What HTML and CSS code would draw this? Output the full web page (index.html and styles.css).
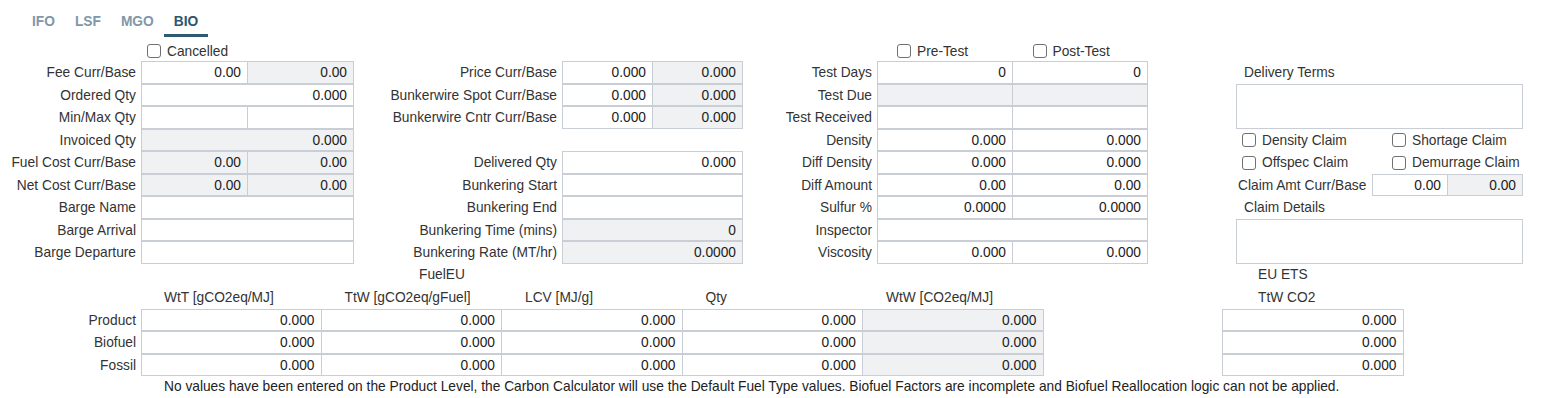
FILE: index.html
```html
<!DOCTYPE html>
<html lang="en">
<head>
    <meta charset="UTF-8">
    <meta name="viewport" content="width=device-width, initial-scale=1.0">
    <title>Fuel Details - BIO</title>
    <link rel="stylesheet" href="styles.css">
</head>
<body>
    <div class="tabs">
        <span class="tab">IFO</span>
        <span class="tab">LSF</span>
        <span class="tab">MGO</span>
        <span class="tab active">BIO</span>
    </div>

    <div class="top">
        <div class="main-grid">
            <!-- row 0: checkboxes -->
            <div></div>
            <label class="check check-cancel"><input type="checkbox" class="box">Cancelled</label>
            <div></div>
            <div></div>
            <div></div>
            <div class="pair">
                <label class="check check-test"><input type="checkbox" class="box">Pre-Test</label>
                <label class="check check-test"><input type="checkbox" class="box">Post-Test</label>
            </div>

            <div class="lbl">Fee Curr/Base</div>
            <div class="pair"><div class="fld">0.00</div><div class="fld ro">0.00</div></div>
            <div class="lbl">Price Curr/Base</div>
            <div class="pair"><div class="fld">0.000</div><div class="fld ro">0.000</div></div>
            <div class="lbl">Test Days</div>
            <div class="pair"><div class="fld">0</div><div class="fld">0</div></div>

            <div class="lbl">Ordered Qty</div>
            <div class="fld">0.000</div>
            <div class="lbl">Bunkerwire Spot Curr/Base</div>
            <div class="pair"><div class="fld">0.000</div><div class="fld ro">0.000</div></div>
            <div class="lbl">Test Due</div>
            <div class="pair"><div class="fld ro"></div><div class="fld ro"></div></div>

            <div class="lbl">Min/Max Qty</div>
            <div class="pair"><div class="fld"></div><div class="fld"></div></div>
            <div class="lbl">Bunkerwire Cntr Curr/Base</div>
            <div class="pair"><div class="fld">0.000</div><div class="fld ro">0.000</div></div>
            <div class="lbl">Test Received</div>
            <div class="pair"><div class="fld"></div><div class="fld"></div></div>

            <div class="lbl">Invoiced Qty</div>
            <div class="fld ro">0.000</div>
            <div></div>
            <div></div>
            <div class="lbl">Density</div>
            <div class="pair"><div class="fld">0.000</div><div class="fld">0.000</div></div>

            <div class="lbl">Fuel Cost Curr/Base</div>
            <div class="pair"><div class="fld ro">0.00</div><div class="fld ro">0.00</div></div>
            <div class="lbl">Delivered Qty</div>
            <div class="fld">0.000</div>
            <div class="lbl">Diff Density</div>
            <div class="pair"><div class="fld">0.000</div><div class="fld">0.000</div></div>

            <div class="lbl">Net Cost Curr/Base</div>
            <div class="pair"><div class="fld ro">0.00</div><div class="fld ro">0.00</div></div>
            <div class="lbl">Bunkering Start</div>
            <div class="fld"></div>
            <div class="lbl">Diff Amount</div>
            <div class="pair"><div class="fld">0.00</div><div class="fld">0.00</div></div>

            <div class="lbl">Barge Name</div>
            <div class="fld"></div>
            <div class="lbl">Bunkering End</div>
            <div class="fld"></div>
            <div class="lbl">Sulfur %</div>
            <div class="pair"><div class="fld">0.0000</div><div class="fld">0.0000</div></div>

            <div class="lbl">Barge Arrival</div>
            <div class="fld"></div>
            <div class="lbl">Bunkering Time (mins)</div>
            <div class="fld ro">0</div>
            <div class="lbl">Inspector</div>
            <div class="fld"></div>

            <div class="lbl">Barge Departure</div>
            <div class="fld"></div>
            <div class="lbl">Bunkering Rate (MT/hr)</div>
            <div class="fld ro">0.0000</div>
            <div class="lbl">Viscosity</div>
            <div class="pair"><div class="fld">0.000</div><div class="fld">0.000</div></div>
        </div>

        <div class="side">
            <div class="side-title side-delivery">Delivery Terms</div>
            <div class="memo memo-delivery"></div>
            <div class="claim-checks">
                <label class="check"><input type="checkbox" class="box">Density Claim</label>
                <label class="check"><input type="checkbox" class="box">Shortage Claim</label>
            </div>
            <div class="claim-checks">
                <label class="check"><input type="checkbox" class="box">Offspec Claim</label>
                <label class="check"><input type="checkbox" class="box">Demurrage Claim</label>
            </div>
            <div class="claim-amt">
                <span class="claim-lbl">Claim Amt Curr/Base</span>
                <div class="pair claim-pair"><div class="fld">0.00</div><div class="fld ro">0.00</div></div>
            </div>
            <div class="side-title">Claim Details</div>
            <div class="memo"></div>
        </div>
    </div>

    <div class="fuel">
        <div class="fuel-title">FuelEU</div>
        <div class="ets-title">EU ETS</div>

        <div></div>
        <div class="col-head">WtT [gCO2eq/MJ]</div>
        <div class="col-head">TtW [gCO2eq/gFuel]</div>
        <div class="col-head">LCV [MJ/g]</div>
        <div class="col-head">Qty</div>
        <div class="col-head">WtW [CO2eq/MJ]</div>
        <div></div>
        <div class="ets-head">TtW CO2</div>

        <div class="lbl">Product</div>
        <div class="fld cell">0.000</div>
        <div class="fld cell">0.000</div>
        <div class="fld cell">0.000</div>
        <div class="fld cell">0.000</div>
        <div class="fld cell ro">0.000</div>
        <div></div>
        <div class="fld">0.000</div>

        <div class="lbl">Biofuel</div>
        <div class="fld cell">0.000</div>
        <div class="fld cell">0.000</div>
        <div class="fld cell">0.000</div>
        <div class="fld cell">0.000</div>
        <div class="fld cell ro">0.000</div>
        <div></div>
        <div class="fld">0.000</div>

        <div class="lbl">Fossil</div>
        <div class="fld cell">0.000</div>
        <div class="fld cell">0.000</div>
        <div class="fld cell">0.000</div>
        <div class="fld cell">0.000</div>
        <div class="fld cell ro">0.000</div>
        <div></div>
        <div class="fld">0.000</div>

        <div class="note">No values have been entered on the Product Level, the Carbon Calculator will use the Default Fuel Type values. Biofuel Factors are incomplete and Biofuel Reallocation logic can not be applied.</div>
    </div>
</body>
</html>
```

FILE: styles.css
```css
body {
    margin: 0;
    font-family: "Liberation Sans", Arial, sans-serif;
    font-size: 13.75px;
    color: #333;
    background: #fff;
}
.tabs {
    display: flex;
    height: 38px;
    padding-left: 22px;
}
.tab {
    height: 34px;
    box-sizing: border-box;
    padding: 14px 10px 4px;
    line-height: 16px;
    font-weight: bold;
    color: #8197aa;
    border-bottom: 3px solid transparent;
    cursor: pointer;
}
.tab.active {
    color: #2d566e;
    border-bottom-color: #2f5b72;
    height: 37px;
}
.top {
    display: flex;
}
.main-grid {
    display: grid;
    grid-template-columns: 141px 213px 208px 181px 134px 271px;
    grid-template-rows: 23px repeat(9, 22.5px);
}
.lbl {
    text-align: right;
    padding-right: 5px;
    line-height: 24px;
    white-space: nowrap;
}
.pair {
    display: flex;
}
.pair > * {
    flex: 1;
    min-width: 0;
}
.pair .fld + .fld {
    margin-left: -1px;
}
.fld {
    box-sizing: border-box;
    height: 22.5px;
    border: 1px solid #c9ced6;
    background: #fff;
    text-align: right;
    padding-right: 6px;
    line-height: 22px;
    color: #222;
    white-space: nowrap;
    overflow: hidden;
}
.fld.ro {
    background: #eff1f3;
}
.check {
    display: flex;
    align-items: center;
    gap: 6px;
    white-space: nowrap;
    cursor: pointer;
}
.box {
    appearance: none;
    -webkit-appearance: none;
    margin: 0;
    width: 14px;
    height: 14px;
    box-sizing: border-box;
    border: 1px solid #707070;
    border-radius: 3px;
    background: #fff;
    flex: none;
}
.check-cancel {
    padding: 3px 0 0 6px;
}
.check-test {
    padding: 3px 0 0 20px;
}

/* right hand column */
.side {
    margin-left: 88px;
    width: 287px;
    display: grid;
    grid-template-rows: 23px repeat(9, 22.5px);
}
.side-title {
    padding-left: 8px;
    line-height: 24px;
}
.side-delivery {
    grid-row: 2;
}
.memo {
    grid-row: span 2;
    border: 1px solid #c9ced6;
    background: #fff;
}
.claim-checks {
    display: grid;
    grid-template-columns: 150px 1fr;
    padding: 1px 0 0 6px;
}
.claim-amt {
    display: flex;
    align-items: center;
}
.claim-lbl {
    flex: 1;
    padding: 1px 0 0 2px;
    white-space: nowrap;
}
.claim-pair {
    width: 151px;
}

/* FuelEU / EU ETS table */
.fuel {
    display: grid;
    grid-template-columns: 141px repeat(5, 180.5px) 178.5px 181.5px;
    grid-template-rows: repeat(5, 22.5px) 22px;
}
.fuel-title {
    grid-column: 2 / 7;
    padding-left: 278px;
    line-height: 22.5px;
}
.ets-title {
    grid-column: 8;
    padding-left: 36px;
    line-height: 22.5px;
}
.col-head {
    padding-left: 23px;
    line-height: 23px;
    white-space: nowrap;
}
.ets-head {
    padding-left: 36px;
    line-height: 23px;
}
.cell + .cell {
    margin-left: -1px;
}
.note {
    grid-column: 2 / -1;
    padding-left: 23px;
    line-height: 22px;
    color: #222;
    white-space: nowrap;
}
```
